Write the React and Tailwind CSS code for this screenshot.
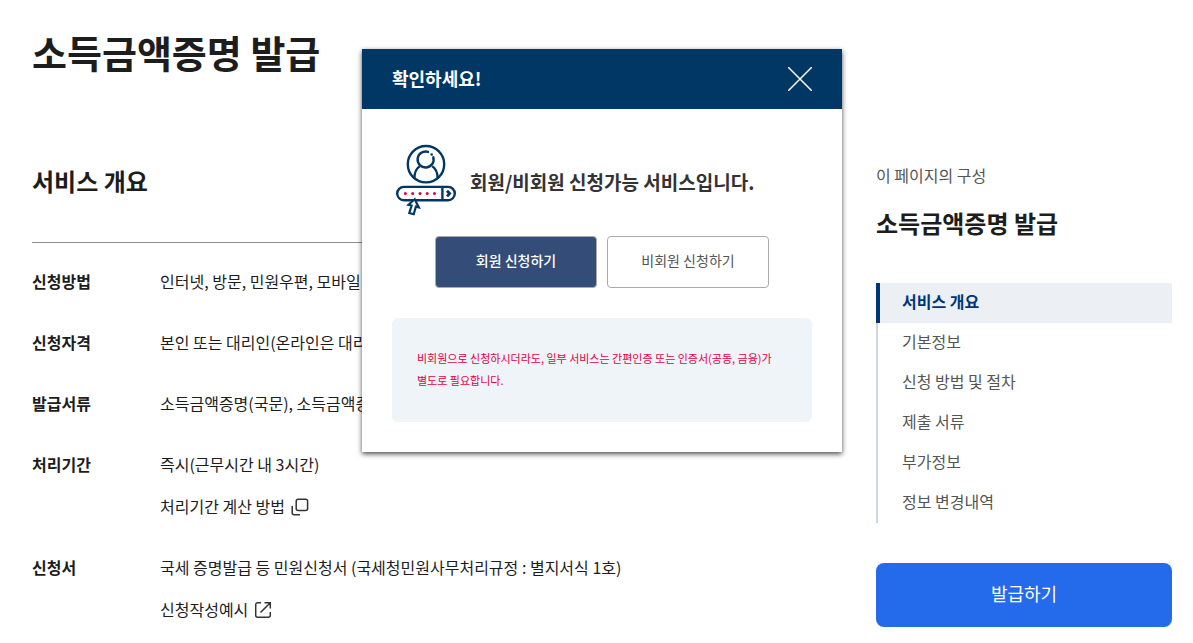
import { useState } from "react";

const overview = [
  { term: "신청방법", lines: [{ text: "인터넷, 방문, 민원우편, 모바일" }] },
  { term: "신청자격", lines: [{ text: "본인 또는 대리인(온라인은 대리신청 불가)" }] },
  { term: "발급서류", lines: [{ text: "소득금액증명(국문), 소득금액증명(영문)" }] },
  {
    term: "처리기간",
    lines: [
      { text: "즉시(근무시간 내 3시간)" },
      { text: "처리기간 계산 방법", icon: "popup" },
    ],
  },
  {
    term: "신청서",
    lines: [
      { text: "국세 증명발급 등 민원신청서 (국세청민원사무처리규정 : 별지서식 1호)" },
      { text: "신청작성예시", icon: "external" },
    ],
  },
];

const sections = [
  "서비스 개요",
  "기본정보",
  "신청 방법 및 절차",
  "제출 서류",
  "부가정보",
  "정보 변경내역",
];

function PopupIcon() {
  return (
    <svg viewBox="0 0 18 18" className="h-[18px] w-[18px]" fill="none" stroke="#333" strokeWidth="1.5" aria-hidden="true">
      <rect x="5.2" y="1.2" width="11.4" height="11.4" rx="2" />
      <path d="M1.2 8v6.8a2 2 0 0 0 2 2H9" />
    </svg>
  );
}

function ExternalIcon() {
  return (
    <svg viewBox="0 0 18 18" className="h-[18px] w-[18px]" fill="none" stroke="#333" strokeWidth="1.5" aria-hidden="true">
      <path d="M7 1.7H3.7a2 2 0 0 0-2 2v10.6a2 2 0 0 0 2 2h10.6a2 2 0 0 0 2-2V11M10.5 1.7h5.8v5.8M16.3 1.7 6.5 11.5" />
    </svg>
  );
}

function MemberIcon() {
  return (
    <svg viewBox="0 0 64 76" className="h-[76px] w-16 shrink-0" fill="none" stroke="#003764" strokeWidth="2.4" aria-hidden="true">
      <circle cx="32" cy="22.2" r="18.2" />
      <path d="M34 9.9A8 8 0 1 0 39.3 15.3" strokeLinecap="round" />
      <circle cx="37.7" cy="12.5" r="1.3" fill="#003764" stroke="none" />
      <path d="M20.4 36.5c0-5.5 1.6-10 5.4-12.3M43.6 36.5c0-5.5-1.6-10-5.4-12.3" />
      <rect x="3.2" y="44.9" width="57.6" height="13.3" rx="6.6" />
      <path d="M48.4 45v13" />
      <path d="m53 48.8 2.6 2.8-2.6 2.8" strokeWidth="2.8" />
      <g fill="#e4003f" stroke="none">
        <circle cx="11.4" cy="51.6" r="1.5" />
        <circle cx="18.7" cy="51.6" r="1.5" />
        <circle cx="26" cy="51.6" r="1.5" />
        <circle cx="33.2" cy="51.6" r="1.5" />
        <circle cx="40.5" cy="51.6" r="1.5" />
      </g>
      <path d="M20.7 57.2 14.4 62.8l3.2.7-2.3 7.5 4.4 1.2 2.2-7.6 2.9.8z" fill="#fff" strokeWidth="2.2" />
    </svg>
  );
}

function Overview() {
  return (
    <section>
      <h2 className="text-2xl font-bold">서비스 개요</h2>
      <dl className="mt-[45px] flex flex-col gap-9 border-t border-[#8e8e8e] pt-[26px] leading-[25px]">
        {overview.map(({ term, lines }) => (
          <div key={term} className="flex">
            <dt className="w-32 shrink-0 font-bold">{term}</dt>
            <dd className="flex flex-col items-start gap-[17px]">
              {lines.map(({ text, icon }) =>
                icon ? (
                  <a key={text} href="#" className="flex items-center gap-1.5">
                    {text}
                    {icon === "popup" ? <PopupIcon /> : <ExternalIcon />}
                  </a>
                ) : (
                  <span key={text}>{text}</span>
                )
              )}
            </dd>
          </div>
        ))}
      </dl>
    </section>
  );
}

function PageNav() {
  return (
    <aside className="w-[296px] shrink-0 pt-[163px]">
      <p className="leading-6 text-[#555]">이 페이지의 구성</p>
      <p className="mt-5 text-2xl font-bold">소득금액증명 발급</p>
      <nav className="mt-11 text-[#555]">
        {sections.map((name, i) => (
          <a
            key={name}
            href="#"
            className={
              i === 0
                ? "flex h-10 items-center border-l-4 border-[#003675] bg-[#ecf0f5] pb-1 pl-[22px] font-bold text-[#003675]"
                : "flex h-10 items-center border-l-2 border-[#cdd8e6] pb-1 pl-6"
            }
          >
            {name}
          </a>
        ))}
      </nav>
      <button type="button" className="mt-10 h-16 w-full rounded-lg bg-[#246beb] pb-1 text-lg text-white">
        발급하기
      </button>
    </aside>
  );
}

function ConfirmDialog({ onClose }) {
  return (
    <div
      role="dialog"
      aria-labelledby="confirm-title"
      className="absolute left-[362px] top-[49px] w-[480px] bg-white text-[#333] shadow-[0_2px_5px_rgba(0,0,0,0.7)]"
    >
      <header className="flex h-[60px] items-center justify-between bg-[#003764] px-[30px] text-white">
        <h2 id="confirm-title" className="pb-0.5 text-lg font-bold">확인하세요!</h2>
        <button type="button" onClick={onClose} aria-label="닫기">
          <svg viewBox="0 0 24 24" className="h-6 w-6" stroke="currentColor" strokeWidth="1.5" aria-hidden="true">
            <path d="M0 0 24 24M24 0 0 24" />
          </svg>
        </button>
      </header>
      <div className="px-[30px] pb-[30px] pt-[33px]">
        <div className="flex items-center gap-3 pl-0.5">
          <MemberIcon />
          <strong className="pt-1 text-[19px] font-bold">회원/비회원 신청가능 서비스입니다.</strong>
        </div>
        <div className="mt-[18px] flex justify-center gap-[10px] text-sm">
          <button type="button" className="h-[52px] w-[162px] rounded border border-[#aaa] bg-[#334c78] pb-1 font-medium text-white">
            회원 신청하기
          </button>
          <button type="button" className="h-[52px] w-[162px] rounded border border-[#aaa] bg-white pb-1 text-[#555]">
            비회원 신청하기
          </button>
        </div>
        <p className="mt-[30px] rounded-md bg-[#eff4f9] pb-[31px] pl-[25px] pr-9 pt-[29px] text-[11px] leading-[22px] text-[#e4003f]">
          비회원으로 신청하시더라도, 일부 서비스는 간편인증 또는 인증서(공동, 금융)가 별도로 필요합니다.
        </p>
      </div>
    </div>
  );
}

export default function App() {
  const [open, setOpen] = useState(true);

  return (
    <div className="relative bg-white font-['Noto_Sans_CJK_KR',sans-serif] text-[#1d1d1d]">
      <div className="flex gap-20 pb-4 pl-8 pr-[21px]">
        <main className="min-w-0 flex-1 pt-[26px]">
          <h1 className="mb-[87px] text-[38px] font-bold leading-[52px]">소득금액증명 발급</h1>
          <Overview />
        </main>
        <PageNav />
      </div>
      {open && <ConfirmDialog onClose={() => setOpen(false)} />}
    </div>
  );
}
